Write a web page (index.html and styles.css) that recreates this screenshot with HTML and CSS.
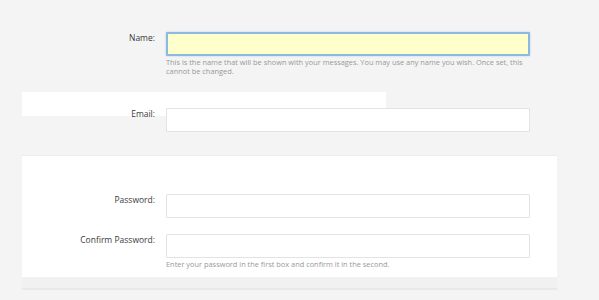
FILE: index.html
```html
<!DOCTYPE html>
<html lang="en">
<head>
  <meta charset="UTF-8">
  <meta name="viewport" content="width=device-width, initial-scale=1.0">
  <title>Register</title>
  <link rel="stylesheet" href="styles.css">
</head>
<body>
<div class="register-form">
  <div class="form-row row-name">
    <label class="form-label" for="name">Name:</label>
    <div class="form-field">
      <input class="text-input focused" id="name" type="text">
      <p class="form-hint">This is the name that will be shown with your messages. You may use any name you wish. Once set, this cannot be changed.</p>
    </div>
  </div>

  <div class="blank-strip"></div>

  <div class="form-row row-email">
    <label class="form-label" for="email">Email:</label>
    <div class="form-field">
      <input class="text-input" id="email" type="email">
    </div>
  </div>

  <div class="form-panel">
    <div class="form-row">
      <label class="form-label" for="password">Password:</label>
      <div class="form-field">
        <input class="text-input" id="password" type="password">
      </div>
    </div>
    <div class="form-row">
      <label class="form-label" for="confirm">Confirm Password:</label>
      <div class="form-field">
        <input class="text-input" id="confirm" type="password">
        <p class="form-hint">Enter your password in the first box and confirm it in the second.</p>
      </div>
    </div>
  </div>

  <div class="panel-footer"></div>
</div>
</body>
</html>
```

FILE: styles.css
```css
:root {
  --page-bg: #f4f4f4;
  --panel-bg: #ffffff;
  --label-color: #3a3a3a;
  --hint-color: #999999;
  --input-border: #e3e3e3;
  --focus-border: #8cb8e4;
  --focus-fill: #ffffcc;
}

* {
  box-sizing: border-box;
  margin: 0;
  padding: 0;
}

body {
  font-family: 'Open Sans', sans-serif;
  background: var(--page-bg);
  color: var(--label-color);
}

.register-form {
  width: 535px;
  margin-left: 22px;
  padding-top: 32px;
}

.form-row {
  display: grid;
  grid-template-columns: 133px 364px;
  column-gap: 11px;
  align-items: start;
}

.form-label {
  text-align: right;
  font-size: 8.5px;
  line-height: 12px;
  color: var(--label-color);
}

.text-input {
  display: block;
  width: 364px;
  height: 24px;
  border: 1px solid var(--input-border);
  background: var(--panel-bg);
  border-radius: 1px;
  outline: none;
}

.text-input.focused {
  border: 2px solid var(--focus-border);
  background: var(--focus-fill);
  box-shadow: 0 0 2px rgba(120, 170, 220, 0.5);
}

.form-hint {
  font-size: 7.4px;
  line-height: 9px;
  color: var(--hint-color);
  margin-top: 2px;
}

.blank-strip {
  width: 364px;
  height: 24px;
  margin-top: 16px;
  background: var(--panel-bg);
}

.row-email {
  margin-top: -8px;
}

.form-panel {
  margin-top: 23px;
  background: var(--panel-bg);
  border-top: 1px solid #ececec;
  padding: 38px 0 8px;
  display: flex;
  flex-direction: column;
  gap: 16px;
}

.panel-footer {
  height: 13px;
  background: #f1f1f1;
  border-bottom: 2px solid #e9e9e9;
}
```
